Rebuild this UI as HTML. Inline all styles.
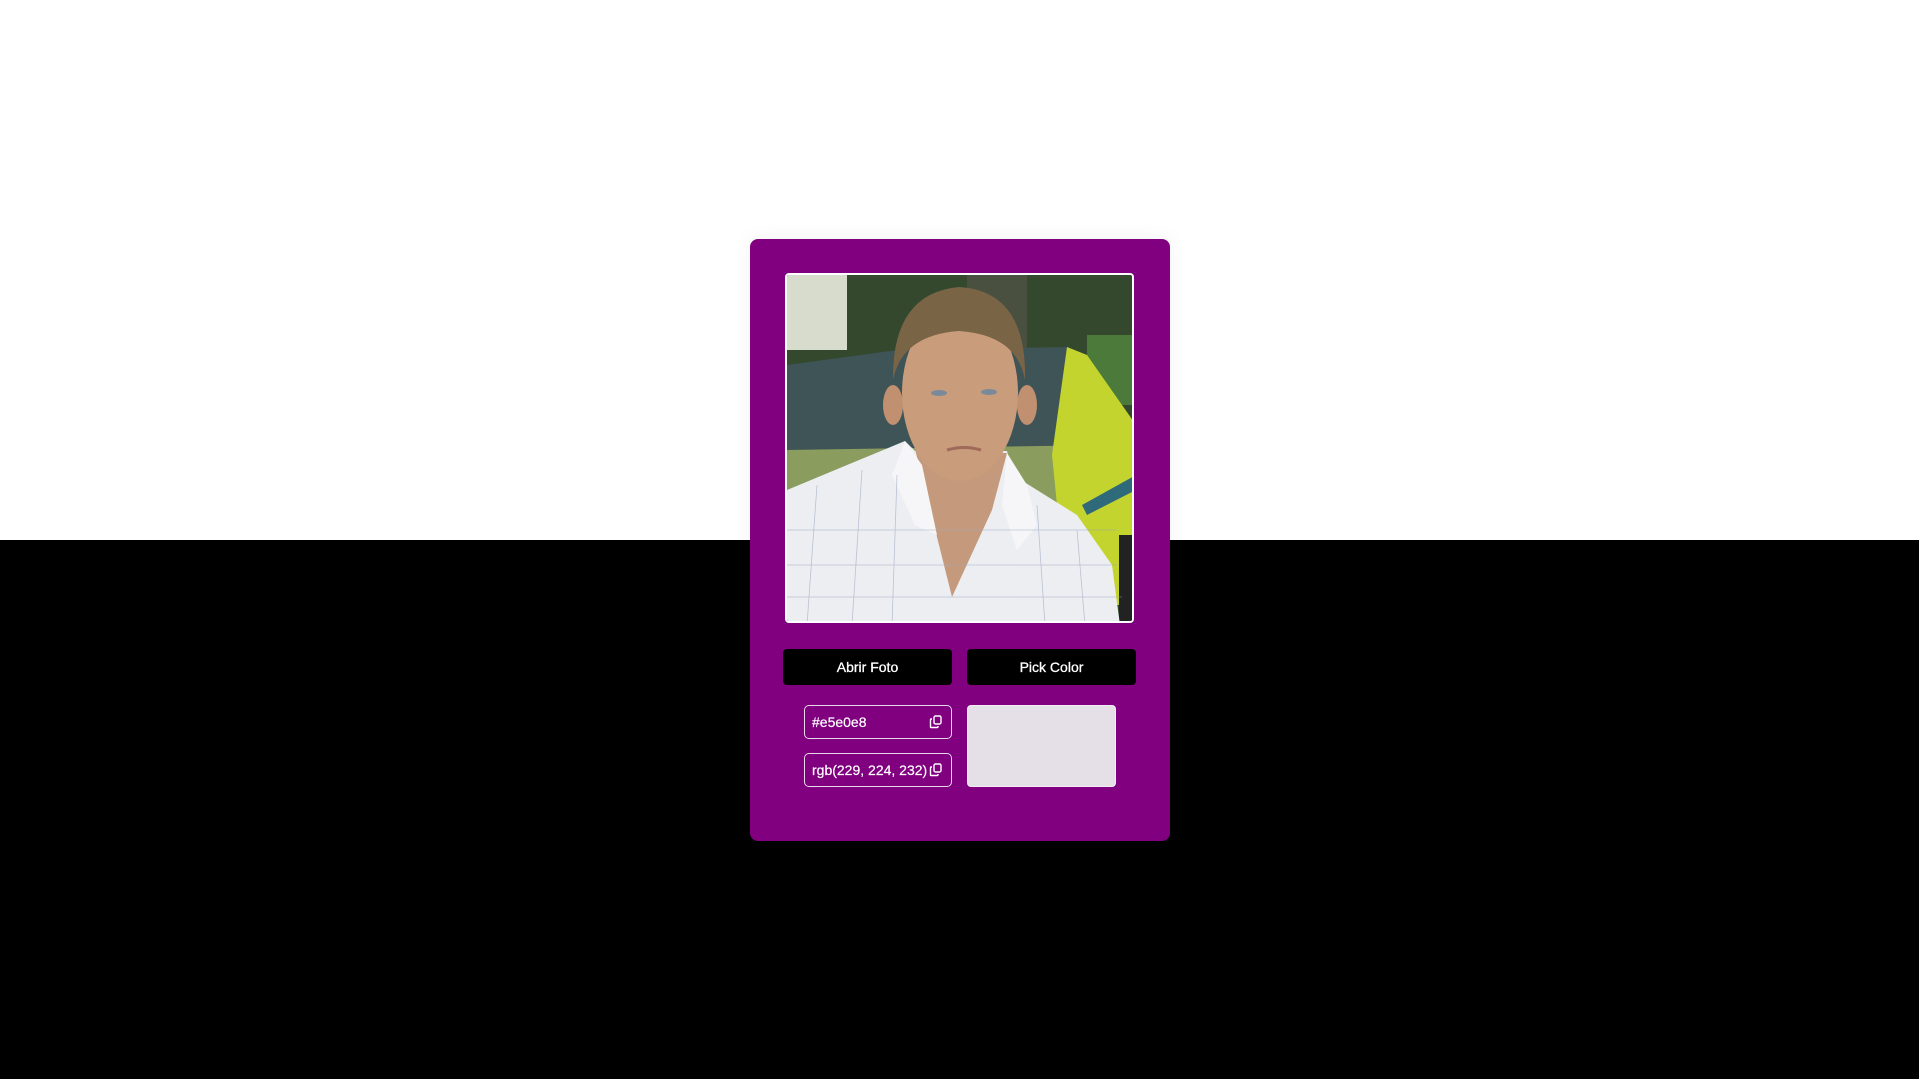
<!DOCTYPE html>
<html><head><meta charset="utf-8"><style>
*{margin:0;padding:0;box-sizing:border-box}
html,body{width:1919px;height:1079px;overflow:hidden;font-family:"Liberation Sans",sans-serif}
body{background:linear-gradient(#fff 0,#fff 540px,#000 540px)}
.card{position:absolute;left:750px;top:239px;width:420px;height:602px;background:#800080;border-radius:8px;box-shadow:0 0 20px rgba(0,0,0,.06)}
.img{position:absolute;left:785px;top:273px;width:349px;height:350px;border:2px solid #fff;border-radius:4px;overflow:hidden;background:#3a4a35}
.btn{position:absolute;top:649px;height:36px;background:#000;border-radius:4px;color:#fff;font-size:14px;display:flex;align-items:center;justify-content:center;-webkit-text-stroke:.3px #fff}
.field{position:absolute;left:804px;width:148px;height:34px;border:1.5px solid #e8d8ea;border-radius:5px;color:#fff;font-size:14px;display:flex;align-items:center;padding-left:7px;-webkit-text-stroke:.2px #fff}
.field svg{position:absolute;right:8px;top:9px}
.sw{position:absolute;left:967px;top:705px;width:149px;height:82px;background:#e5e0e8;border-radius:4px;border:1px solid #f3eef5}
</style></head><body>
<div class="card"></div>
<div class="img">
<svg width="349" height="350" viewBox="0 0 349 350">
<rect width="349" height="350" fill="#34482e"/>
<rect x="0" y="0" width="60" height="75" fill="#d8dccc"/>
<rect x="180" y="0" width="60" height="80" fill="#4a5040"/>
<rect x="300" y="60" width="49" height="70" fill="#4c7a3a"/>
<path d="M0 90 L110 75 L280 72 L310 120 L320 180 L0 180 Z" fill="#3e5456"/>
<path d="M0 175 L320 170 L330 230 L0 230 Z" fill="#8a9c5e"/>
<path d="M280 72 L300 80 L349 150 L349 330 L330 330 L320 290 L270 230 L265 180 Z" fill="#c4d42e"/>
<path d="M295 230 L349 200 L349 215 L300 240 Z" fill="#2f6a7a"/>
<rect x="332" y="260" width="17" height="90" fill="#222"/>
<path d="M0 215 L60 190 L118 166 L128 176 L220 176 L226 200 L290 240 L325 290 L333 350 L0 350 Z" fill="#eceef2"/>
<path d="M128 174 L165 322 L205 235 L220 178 Z" fill="#c59a7c"/>
<path d="M118 166 L135 190 L150 260 L128 250 L105 200 Z" fill="#f6f6f8"/>
<path d="M220 178 L215 230 L230 275 L250 250 L240 210 Z" fill="#f6f6f8"/>
<g stroke="#9aa4c0" stroke-width="0.8" opacity=".6">
<path d="M0 255 L330 255 M0 290 L330 290 M0 322 L335 322 M30 210 L20 350 M75 195 L65 350 M110 200 L105 350 M250 230 L258 350 M290 255 L298 350"/>
</g>
<ellipse cx="106" cy="130" rx="10" ry="20" fill="#c09070"/>
<ellipse cx="240" cy="130" rx="10" ry="20" fill="#c09070"/>
<ellipse cx="173" cy="118" rx="58" ry="88" fill="#c99c7c"/>
<path d="M106 105 Q105 18 172 12 Q240 16 238 105 Q230 60 172 56 Q115 60 106 105 Z" fill="#7a6446"/>
<ellipse cx="152" cy="118" rx="8" ry="3" fill="#7a8a9a"/>
<ellipse cx="202" cy="117" rx="8" ry="3" fill="#7a8a9a"/>
<path d="M160 175 Q177 170 194 175" stroke="#a06a5a" stroke-width="3" fill="none"/>
</svg>
</div>
<div class="btn" style="left:783px;width:169px">Abrir Foto</div>
<div class="btn" style="left:967px;width:169px">Pick Color</div>
<div class="field" style="top:705px">#e5e0e8<svg width="14" height="14" viewBox="0 0 14 14" fill="none" stroke="#fff" stroke-width="1.4"><rect x="5" y="1" width="7" height="8" rx="1.5"/><path d="M3 4 L2 4 Q1.5 4 1.5 5 L1.5 12 Q1.5 12.5 2 12.5 L8 12.5 Q9 12.5 9 11.5 L9 11"/></svg></div>
<div class="field" style="top:753px">rgb(229, 224, 232)<svg width="14" height="14" viewBox="0 0 14 14" fill="none" stroke="#fff" stroke-width="1.4"><rect x="5" y="1" width="7" height="8" rx="1.5"/><path d="M3 4 L2 4 Q1.5 4 1.5 5 L1.5 12 Q1.5 12.5 2 12.5 L8 12.5 Q9 12.5 9 11.5 L9 11"/></svg></div>
<div class="sw"></div>
</body></html>
